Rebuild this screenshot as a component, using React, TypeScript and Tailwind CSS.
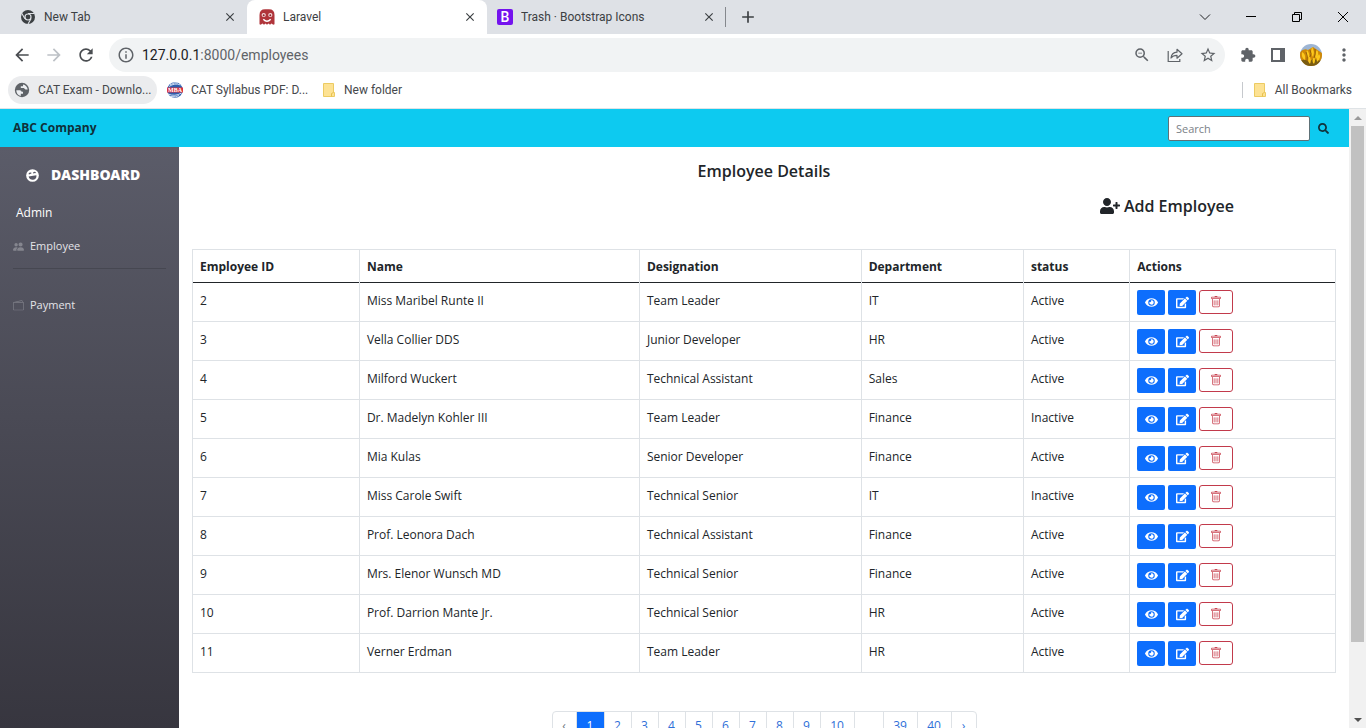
import React from "react";
import { FaEdit, FaEye, FaSearch, FaUserPlus } from "react-icons/fa";
import { BsTrash, BsPeopleFill, BsWallet2 } from "react-icons/bs";
import {
  MdArrowBack,
  MdArrowForward,
  MdRefresh,
  MdInfoOutline,
  MdZoomOut,
  MdMoreVert,
  MdClose,
  MdAdd,
  MdStarBorder,
} from "react-icons/md";

type Employee = {
  id: number;
  name: string;
  designation: string;
  department: string;
  status: "Active" | "Inactive";
};

const employees: Employee[] = [
  { id: 2, name: "Miss Maribel Runte II", designation: "Team Leader", department: "IT", status: "Active" },
  { id: 3, name: "Vella Collier DDS", designation: "Junior Developer", department: "HR", status: "Active" },
  { id: 4, name: "Milford Wuckert", designation: "Technical Assistant", department: "Sales", status: "Active" },
  { id: 5, name: "Dr. Madelyn Kohler III", designation: "Team Leader", department: "Finance", status: "Inactive" },
  { id: 6, name: "Mia Kulas", designation: "Senior Developer", department: "Finance", status: "Active" },
  { id: 7, name: "Miss Carole Swift", designation: "Technical Senior", department: "IT", status: "Inactive" },
  { id: 8, name: "Prof. Leonora Dach", designation: "Technical Assistant", department: "Finance", status: "Active" },
  { id: 9, name: "Mrs. Elenor Wunsch MD", designation: "Technical Senior", department: "Finance", status: "Active" },
  { id: 10, name: "Prof. Darrion Mante Jr.", designation: "Technical Senior", department: "HR", status: "Active" },
  { id: 11, name: "Verner Erdman", designation: "Team Leader", department: "HR", status: "Active" },
];

const columns = [
  { title: "Employee ID", width: "w-[14.6%]" },
  { title: "Name", width: "w-[24.5%]" },
  { title: "Designation", width: "w-[19.4%]" },
  { title: "Department", width: "w-[14.2%]" },
  { title: "status", width: "w-[9.3%]" },
  { title: "Actions", width: "w-[18%]" },
];

const pages = ["1", "2", "3", "4", "5", "6", "7", "8", "9", "10", "...", "39", "40"];

function ChromeIcon() {
  return (
    <svg viewBox="0 0 16 16" className="size-4 shrink-0" aria-hidden="true">
      <circle cx="8" cy="8" r="7" fill="#3c4043" />
      <circle cx="8" cy="8" r="3.6" fill="#dee1e6" />
      <circle cx="8" cy="8" r="2.4" fill="#3c4043" />
      <path d="M8 4.5h6.2M4.9 9.7 1.9 4.4M11 9.8 8 15" stroke="#dee1e6" strokeWidth="1.1" />
    </svg>
  );
}

function GhostIcon() {
  return (
    <svg viewBox="0 0 16 16" className="size-4 shrink-0" aria-hidden="true">
      <path d="M.5 6Q.5.3 6 .3h4Q15.5.3 15.5 6v9.2l-1.3.6-1.6-1.3-1.6 1.3-1.5-1.3L8 15.8l-1.5-1.3L5 15.8l-1.6-1.3-1.6 1.3-1.3-.6Z" fill="#b0353b" />
      <circle cx="4.7" cy="6" r="2.1" fill="#f6dedf" />
      <circle cx="11.3" cy="6" r="2.1" fill="#f6dedf" />
      <circle cx="4.7" cy="6.2" r="1" fill="#8d2228" />
      <circle cx="11.3" cy="6.2" r="1" fill="#8d2228" />
      <path d="M4.3 10.2q3.7 4 7.4 0" stroke="#fff" strokeWidth="1.4" fill="none" />
    </svg>
  );
}

function FolderIcon() {
  return (
    <svg viewBox="0 0 14 16" className="h-4 w-3.5 shrink-0" aria-hidden="true">
      <path d="M1.5 1.5h10v9h1v4h-11Z" fill="#fde293" stroke="#eccb62" />
      <path d="M9.5 14.5v-3l2-1" stroke="#e8c14d" fill="none" />
    </svg>
  );
}

function GlobeIcon() {
  return (
    <svg viewBox="0 0 16 16" className="size-4 shrink-0" aria-hidden="true">
      <circle cx="8" cy="8" r="7.2" fill="#5f6368" />
      <path d="M2.3 8.2h3.5q1.8 0 1.8 1.5H9v2H6.8v2.3Q2.3 13 2.3 8.2ZM13.7 7.500H11.500L9.800 6H6.800V4.300H9V2.400q4 .7 4.700 5.100Z" fill="#eceef1" />
    </svg>
  );
}

function MbaIcon() {
  return (
    <svg viewBox="0 0 16 16" className="size-4 shrink-0" aria-hidden="true">
      <circle cx="8" cy="8" r="7.8" fill="#2d5fae" />
      <path d="M2 4.500Q8 .5 13.500 3M1 12q7 3 13.500-1M4 14.500q5 1 8-1M3 2.800Q8 0 11 1" stroke="#dfe8f7" strokeWidth=".9" fill="none" />
      <path d="M0 5.500h16v5H0Z" fill="#dc3340" />
      <text x="8" y="10" textAnchor="middle" fontSize="6" fontWeight="700" fill="#fff" fontFamily="Liberation Serif, serif">MBA</text>
    </svg>
  );
}

function ShareIcon() {
  return (
    <svg viewBox="0 0 16 16" className="size-4" fill="none" stroke="#5f6368" strokeWidth="1.2" aria-hidden="true">
      <path d="M1.2 4v10.500h11.600V12" />
      <path d="M4 11q.6-5.500 6-5.800V2.300L15 6.800l-5 4.400V8.400Q6 8.400 4 11Z" strokeLinejoin="round" />
    </svg>
  );
}

function PuzzleIcon() {
  return (
    <svg viewBox="0 0 24 24" className="size-4" fill="currentColor" aria-hidden="true">
      <path d="M20.5 11H19V7c0-1.100-.9-2-2-2h-4V3.500C13 2.120 11.880 1 10.500 1S8 2.120 8 3.500V5H4c-1.100 0-1.990.9-1.990 2v3.800H3.500c1.490 0 2.700 1.210 2.700 2.700s-1.210 2.700-2.700 2.700H2V20c0 1.100.9 2 2 2h3.800v-1.500c0-1.490 1.210-2.700 2.700-2.700 1.490 0 2.700 1.210 2.700 2.700V22H17c1.100 0 2-.9 2-2v-4h1.500c1.380 0 2.500-1.120 2.500-2.500S21.880 11 20.500 11z" />
    </svg>
  );
}

function AvatarIcon() {
  return (
    <svg viewBox="0 0 22 22" className="size-[22px]" aria-hidden="true">
      <clipPath id="avatar-clip">
        <circle cx="11" cy="11" r="11" />
      </clipPath>
      <g clipPath="url(#avatar-clip)">
        <path d="M0 0h22v22H0Z" fill="#9db5d4" />
        <path d="M0 8Q4 4 8 6l5-3 9 6v13H0Z" fill="#d08a08" />
        <path d="M0 17q5-3 9 1l4-3 9 2v5H0Z" fill="#7a5c12" />
        <path d="M2 8q4 2 3 8-4-2-3-8ZM7 6q3 3 2 8-4-3-2-8ZM12 3q3 4 1 10-3-4-1-10ZM17 6q3 4-1 9-2-5 1-9ZM9 12q3 3 1 8-3-3-1-8ZM19 10q3 3-2 8-1-4 2-8ZM14 13q2 3 0 7-3-3 0-7Z" fill="#fcc81c" />
        <path d="M6 8q2 4 1 9M10 6q2 4 0 7M15 5q1 5-1 9" stroke="#94600a" fill="none" />
      </g>
    </svg>
  );
}

function LaughIcon() {
  return (
    <svg viewBox="0 0 16 16" className="size-[13px]" aria-hidden="true">
      <circle cx="8" cy="8" r="7.8" fill="#fff" />
      <path d="m3.200 9.200 9.600-1.600q.6 4.600-3.900 5.500-4.400.5-5.700-3.900Z" fill="#585866" />
      <path d="M3.600 6.400q1-1.800 2.900-1M9 5.200q1.200-1.700 2.900-.6" stroke="#585866" strokeWidth="1.400" fill="none" />
    </svg>
  );
}

function Tab({ icon, title, active = false }: { icon: React.ReactNode; title: string; active?: boolean }) {
  return (
    <div
      className={
        active
          ? "flex h-full w-60 items-center gap-2 rounded-t-lg bg-white pl-3 pr-2.5"
          : "flex h-full w-[239px] items-center gap-2 px-2.5 first:pl-3"
      }
    >
      {icon}
      <span className="flex-1 truncate text-xs text-[#3c4043]">{title}</span>
      <button aria-label={`Close ${title}`} className="text-[#3c4043]">
        <MdClose className="size-3.5" stroke="currentColor" />
      </button>
    </div>
  );
}

function TabStrip() {
  return (
    <div className="flex h-[34px] shrink-0 items-center bg-[#dee1e6]">
      <div className="flex h-full pl-2">
        <Tab icon={<ChromeIcon />} title="New Tab" />
        <Tab icon={<GhostIcon />} title="Laravel" active />
        <Tab
          icon={
            <span className="flex size-4 shrink-0 items-center justify-center rounded-xs bg-[#7413ee] text-sm font-medium text-white">
              B
            </span>
          }
          title="Trash · Bootstrap Icons"
        />
      </div>
      <div className="-ml-px h-5 w-px bg-[#85888d]" />
      <button aria-label="New tab" className="ml-3 text-[#3c4043]">
        <MdAdd className="size-5" />
      </button>
      <div className="ml-auto flex items-center">
        <button aria-label="Search tabs" className="flex w-[46px] justify-center">
          <svg viewBox="0 0 12 12" className="size-3" fill="none" stroke="#202124"><path d="m1 3.500 5 5 5-5" /></svg>
        </button>
        <button aria-label="Minimize" className="flex w-[46px] justify-center">
          <svg viewBox="0 0 10 10" className="size-2.5" fill="none" stroke="#000"><path d="M0 4.500h10" /></svg>
        </button>
        <button aria-label="Restore" className="flex w-[46px] justify-center">
          <svg viewBox="0 0 10 10" className="size-2.5" fill="none" stroke="#000"><path d="M.5 2.500h7v7h-7ZM2.500 2.500v-2h7v7h-2" /></svg>
        </button>
        <button aria-label="Close window" className="flex w-[46px] justify-center">
          <svg viewBox="0 0 10 10" className="size-2.5" fill="none" stroke="#000"><path d="m0 0 10 10M10 0 0 10" /></svg>
        </button>
      </div>
    </div>
  );
}

function Toolbar() {
  return (
    <div className="flex h-[42px] shrink-0 items-center bg-white text-[#5f6368]">
      <div className="flex w-[109px] items-center gap-3 pl-3">
        <button aria-label="Back" className="text-[#4a4d51]"><MdArrowBack className="size-5" /></button>
        <button aria-label="Forward" className="text-[#bdc1c6]"><MdArrowForward className="size-5" /></button>
        <button aria-label="Reload" className="text-[#4a4d51]"><MdRefresh className="size-5" /></button>
      </div>
      <div className="flex h-[34px] flex-1 items-center rounded-full bg-[#f1f3f4] pl-2 pr-2">
        <MdInfoOutline className="size-[18px]" />
        <div className="ml-[7px] flex-1 text-sm text-[#5f6368]">
          <span className="text-[#202124]">127.0.0.1</span>:8000/employees
        </div>
        <div className="flex items-center gap-4">
          <button aria-label="Zoom"><MdZoomOut className="size-[18px]" /></button>
          <button aria-label="Share"><ShareIcon /></button>
          <button aria-label="Bookmark this page"><MdStarBorder className="size-[18px]" /></button>
        </div>
      </div>
      <div className="flex items-center gap-3 pl-[15px] pr-3">
        <button aria-label="Extensions"><PuzzleIcon /></button>
        <button aria-label="Side panel" className="px-[3px]">
          <svg viewBox="0 0 14 14" className="size-3.5"><path d="M0 0h14v14H0ZM2 2v10h7V2Z" fill="#5f6368" fillRule="evenodd" /></svg>
        </button>
        <button aria-label="Profile"><AvatarIcon /></button>
        <button aria-label="Menu"><MdMoreVert className="size-5" /></button>
      </div>
    </div>
  );
}

function Bookmarks() {
  return (
    <div className="flex h-[33px] shrink-0 items-center border-b border-[#dfe3e6] bg-white px-2 pb-1 text-xs text-[#45484c]">
      <a href="#cat-exam" className="flex h-7 w-[149px] items-center gap-2 rounded-full bg-[#ebecee] pl-1.5 whitespace-nowrap">
        <GlobeIcon />
        CAT Exam - Downlo...
      </a>
      <a href="#cat-syllabus" className="ml-2.5 flex w-[147px] items-center gap-2 whitespace-nowrap">
        <MbaIcon />
        CAT Syllabus PDF: D...
      </a>
      <a href="#new-folder" className="ml-2 flex items-center gap-2">
        <FolderIcon />
        New folder
      </a>
      <a href="#all-bookmarks" className="ml-auto flex items-center gap-2 border-l border-[#c6c9cd] pl-2.5 pr-1.5">
        <FolderIcon />
        All Bookmarks
      </a>
    </div>
  );
}

function Sidebar() {
  return (
    <aside className="w-[179px] shrink-0 bg-linear-to-b from-[#5b5c69] to-[#37363f] text-white">
      <div className="flex h-14 items-center gap-3 pl-[26px]">
        <LaughIcon />
        <span className="font-['Noto_Sans',sans-serif] text-sm font-black">DASHBOARD</span>
      </div>
      <div className="px-[13px]">
        <div className="flex h-5 items-center pl-[3px] text-xs">Admin</div>
        <nav className="pt-px">
          <a href="#employee" className="flex h-[45px] items-center gap-1.5 border-b border-[#464751] text-[11px] text-[#e4e4e8]">
            <BsPeopleFill className="size-[11px] text-[#85868f]" />
            Employee
          </a>
          <a href="#payment" className="mt-[22px] flex h-7 items-center gap-1.5 text-[11px] text-[#e4e4e8]">
            <BsWallet2 className="size-[11px] text-[#7d7e87]" />
            Payment
          </a>
        </nav>
      </div>
    </aside>
  );
}

function EmployeeTable() {
  return (
    <table className="w-full table-fixed border-collapse border border-[#dee2e6] text-left text-xs">
      <thead>
        <tr className="h-[33px] border-b border-[#212529]">
          {columns.map((column) => (
            <th key={column.title} className={`${column.width} border-x border-x-[#dee2e6] px-[7px] pt-0.5 font-bold`}>
              {column.title}
            </th>
          ))}
        </tr>
      </thead>
      <tbody>
        {employees.map((employee) => (
          <tr
            key={employee.id}
            className="h-[39px] border-b border-[#dee2e6] [&>td]:border-x [&>td]:border-x-[#dee2e6] [&>td]:px-[7px] [&>td]:not-last:pb-0.5"
          >
            <td>{employee.id}</td>
            <td>{employee.name}</td>
            <td>{employee.designation}</td>
            <td>{employee.department}</td>
            <td>{employee.status}</td>
            <td>
              <div className="flex items-start gap-[3px] text-white">
                <button aria-label={`View ${employee.name}`} className="flex h-[25px] w-7 items-center justify-center rounded-xs bg-[#0d6efd]">
                  <FaEye className="size-[13px]" />
                </button>
                <button aria-label={`Edit ${employee.name}`} className="flex h-[25px] w-7 items-center justify-center rounded-xs bg-[#0d6efd]">
                  <FaEdit className="size-[13px]" />
                </button>
                <button aria-label={`Delete ${employee.name}`} className="flex h-6 w-[34px] items-center justify-center rounded-[3px] border border-[#c23a4b] text-[#c94553]">
                  <BsTrash className="size-3" />
                </button>
              </div>
            </td>
          </tr>
        ))}
      </tbody>
    </table>
  );
}

function Pagination() {
  return (
    <nav aria-label="Pages" className="flex justify-center text-xs text-[#2f6fd8]">
      <div className="flex h-[29px] divide-x divide-[#dee2e6] overflow-hidden rounded-sm border border-[#dee2e6] [&>*]:flex [&>*]:items-center [&>*]:justify-center">
        <button aria-label="Previous page" className="w-6 text-[#6c757d]">‹</button>
        {pages.map((page) =>
          page === "..." ? (
            <span key={page} className="w-[29px] text-[#6c757d]">...</span>
          ) : (
            <a
              key={page}
              href={`#page-${page}`}
              className={
                page === "1" ? "w-7 bg-[#0d6efd] text-white" : page.length === 1 ? "w-[27px]" : "w-[34px]"
              }
            >
              {page}
            </a>
          ),
        )}
        <button aria-label="Next page" className="w-6">›</button>
      </div>
    </nav>
  );
}

function Scrollbar() {
  return (
    <div className="flex w-[17px] shrink-0 flex-col bg-[#f1f1f1]" aria-hidden="true">
      <div className="flex h-[17px] items-center justify-center">
        <svg viewBox="0 0 8 4" className="h-1 w-2"><path d="m0 4 4-4 4 4Z" fill="#9a9a9a" /></svg>
      </div>
      <div className="mx-0.5 flex-[516] bg-[#c1c1c1]" />
      <div className="flex-[69]" />
      <div className="flex h-[17px] items-center justify-center">
        <svg viewBox="0 0 8 4" className="h-1 w-2"><path d="m0 0 4 4 4-4Z" fill="#505050" /></svg>
      </div>
    </div>
  );
}

export default function App() {
  return (
    <div className="flex h-screen flex-col overflow-hidden bg-white font-['Open_Sans',sans-serif] text-[#212529]">
      <div className="shrink-0 font-[Roboto,sans-serif]">
        <TabStrip />
        <Toolbar />
        <Bookmarks />
      </div>
      <div className="flex min-h-0 flex-1">
        <div className="flex min-w-0 flex-1 flex-col">
          <header className="flex h-[38px] shrink-0 items-center justify-between bg-[#0dcaf0] pl-[13px] pr-5">
            <a href="#home" className="text-xs font-bold text-[#0f3039]">ABC Company</a>
            <form className="flex items-center gap-2" onSubmit={(event) => event.preventDefault()}>
              <input
                type="search"
                aria-label="Search"
                placeholder="Search"
                className="h-[25px] w-[142px] rounded-xs border border-[#5e7177] bg-white px-[7px] text-[11px] placeholder:text-[#7b8187]"
              />
              <button aria-label="Submit search" className="text-[#10333c]"><FaSearch className="size-[11px]" /></button>
            </form>
          </header>
          <div className="flex min-h-0 flex-1">
            <Sidebar />
            <main className="min-w-0 flex-1 overflow-hidden px-[13px] pt-3">
              <h1 className="text-center text-base leading-6 font-semibold">Employee Details</h1>
              <div className="mt-[11px] mb-[31px] flex justify-end pr-[102px]">
                <a href="#add-employee" className="flex items-center gap-1 text-base leading-6 font-semibold">
                  <FaUserPlus className="size-5" />
                  Add Employee
                </a>
              </div>
              <EmployeeTable />
              <div className="mt-[38px]">
                <Pagination />
              </div>
            </main>
          </div>
        </div>
        <Scrollbar />
      </div>
    </div>
  );
}
